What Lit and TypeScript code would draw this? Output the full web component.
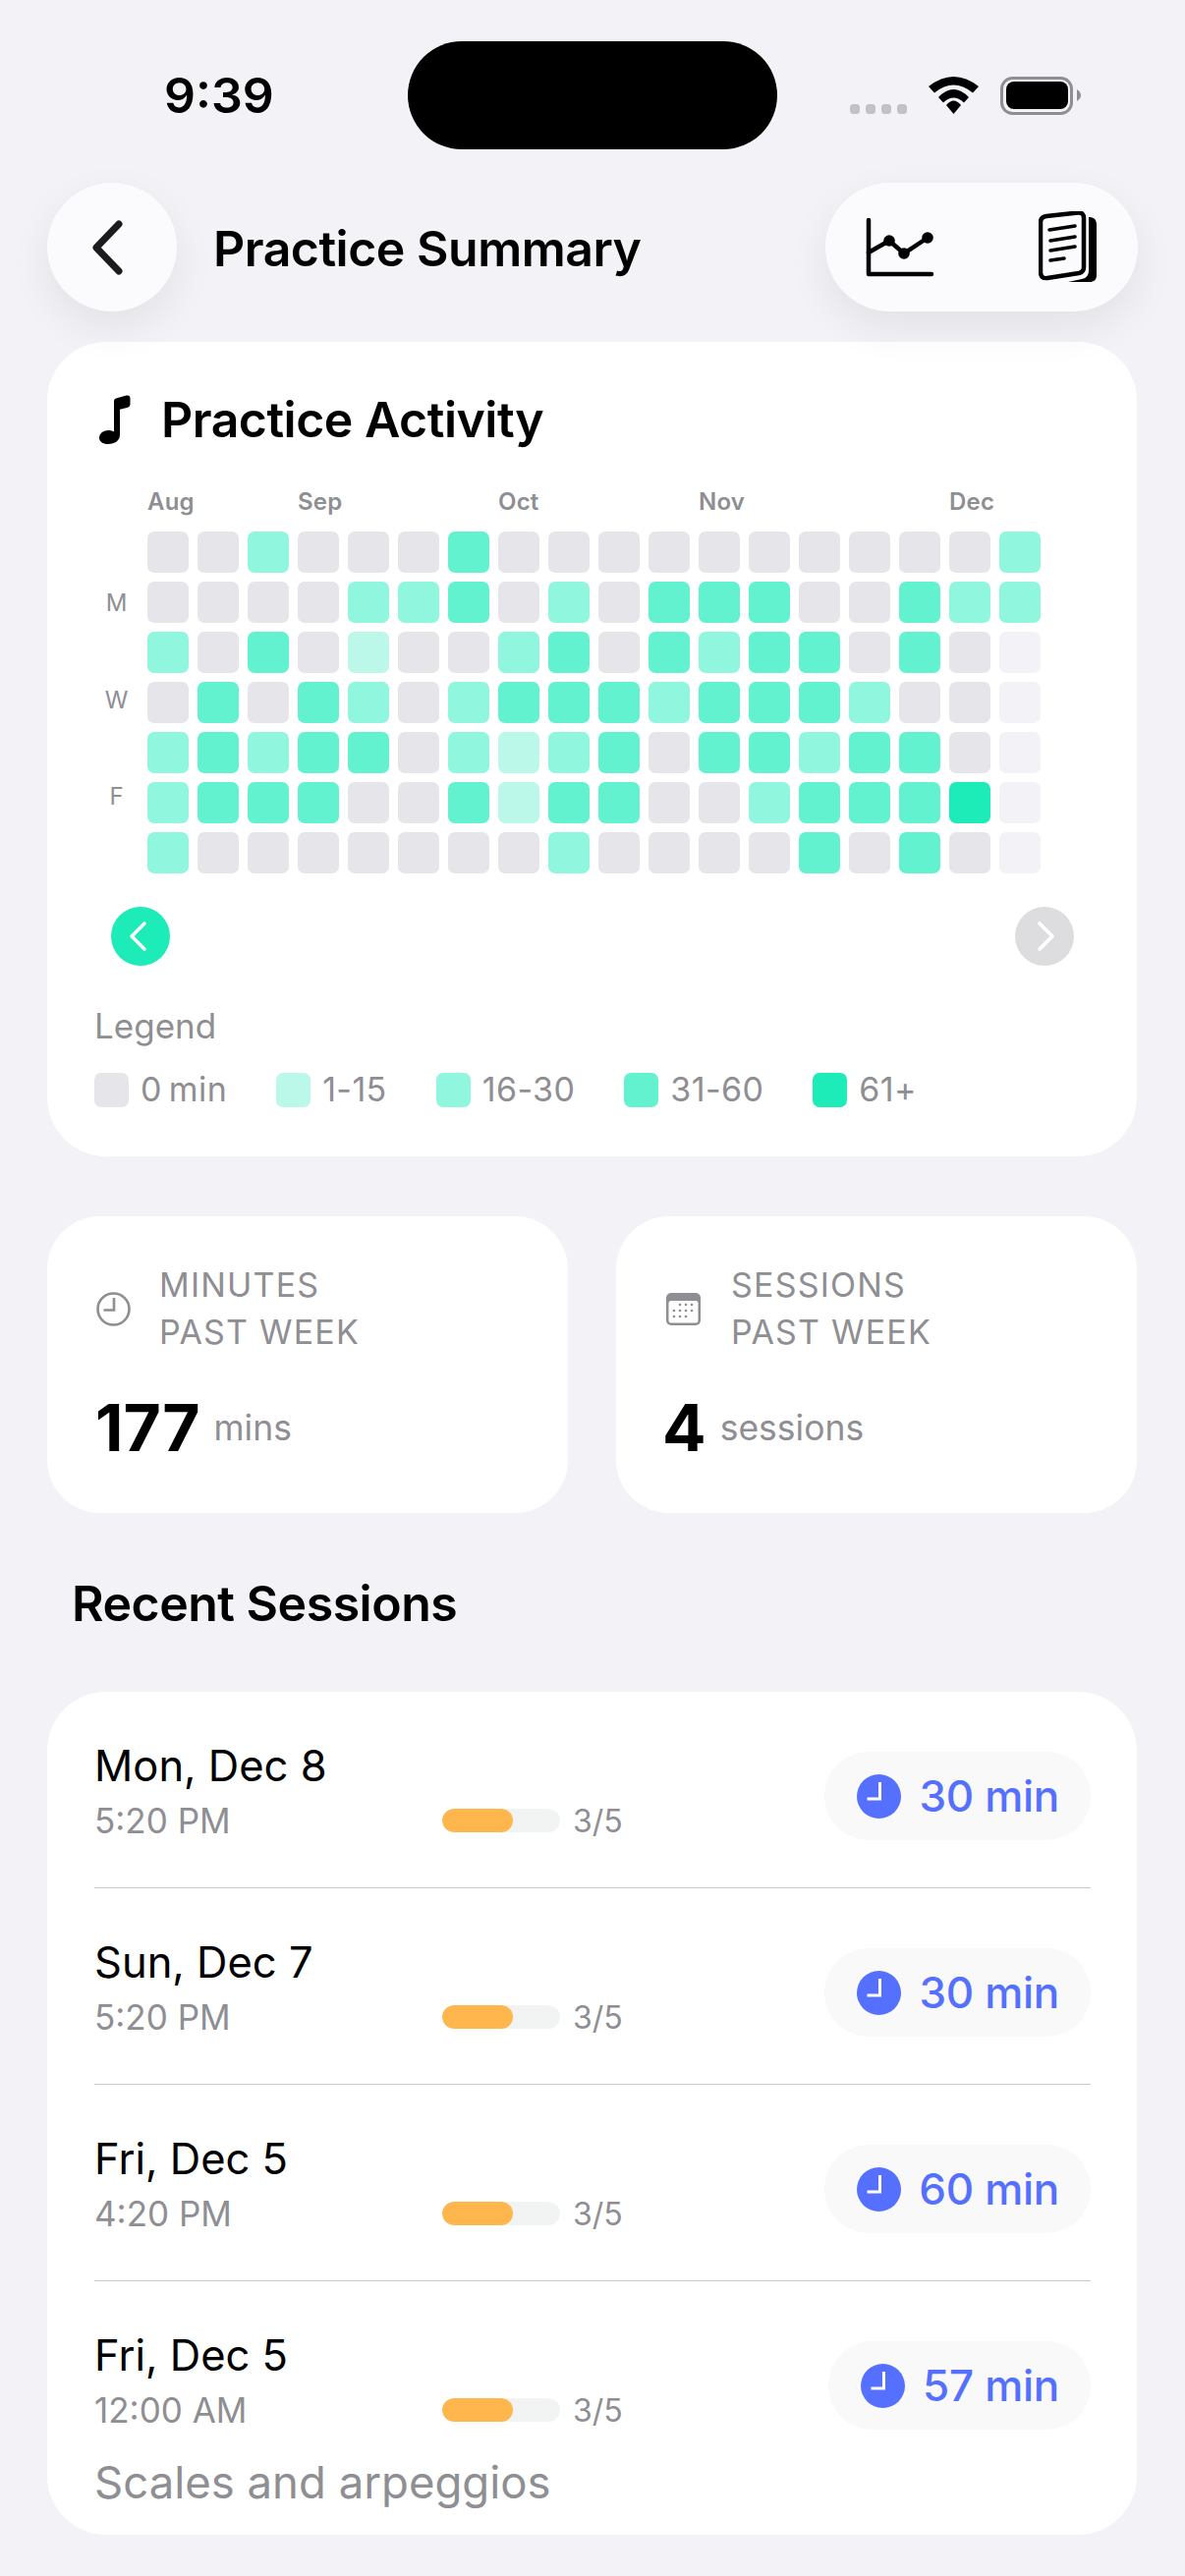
import { LitElement, html, css, svg } from 'lit';
import { customElement } from 'lit/decorators.js';

// 0-4 = minutes bucket, 5 = day still to come
const ACTIVITY = [
  [0, 0, 2, 0, 0, 0, 3, 0, 0, 0, 0, 0, 0, 0, 0, 0, 0, 2],
  [0, 0, 0, 0, 2, 2, 3, 0, 2, 0, 3, 3, 3, 0, 0, 3, 2, 2],
  [2, 0, 3, 0, 1, 0, 0, 2, 3, 0, 3, 2, 3, 3, 0, 3, 0, 5],
  [0, 3, 0, 3, 2, 0, 2, 3, 3, 3, 2, 3, 3, 3, 2, 0, 0, 5],
  [2, 3, 2, 3, 3, 0, 2, 1, 2, 3, 0, 3, 3, 2, 3, 3, 0, 5],
  [2, 3, 3, 3, 0, 0, 3, 1, 3, 3, 0, 0, 2, 3, 3, 3, 4, 5],
  [2, 0, 0, 0, 0, 0, 0, 0, 2, 0, 0, 0, 0, 3, 0, 3, 0, 5],
];

const MONTHS = [
  { label: 'Aug', col: 1 },
  { label: 'Sep', col: 4 },
  { label: 'Oct', col: 8 },
  { label: 'Nov', col: 12 },
  { label: 'Dec', col: 17 },
];

const DAYS = ['', 'M', '', 'W', '', 'F', ''];

const LEGEND = [
  { label: '0 min', level: 0 },
  { label: '1-15', level: 1 },
  { label: '16-30', level: 2 },
  { label: '31-60', level: 3 },
  { label: '61+', level: 4 },
];

const SESSIONS = [
  { date: 'Mon, Dec 8', time: '5:20 PM', mins: 30, note: '' },
  { date: 'Sun, Dec 7', time: '5:20 PM', mins: 30, note: '' },
  { date: 'Fri, Dec 5', time: '4:20 PM', mins: 60, note: '' },
  { date: 'Fri, Dec 5', time: '12:00 AM', mins: 57, note: 'Scales and arpeggios' },
];

const chevron = (points: string, w: number, h: number, sw: number) => html`
  <svg width=${w} height=${h} viewBox="0 0 ${w} ${h}" fill="none" stroke="currentColor" stroke-width=${sw}
    stroke-linecap="round" stroke-linejoin="round"><polyline points=${points}></polyline></svg>
`;

const clockSolid = svg`
  <circle cx="22.5" cy="22.5" r="22.5" fill="#5570ff"></circle>
  <path d="M23.5 8V25H10.500" fill="none" stroke="#fff" stroke-width="3"></path>
`;

@customElement('app-root')
export class AppRoot extends LitElement {
  static styles = css`
    :host {
      display: block;
      width: 1206px;
      height: 2622px;
      overflow: hidden;
      background: #f2f2f7;
      font-family: Inter, 'Liberation Sans', sans-serif;
      color: #000;
    }

    .status {
      display: flex;
      align-items: center;
      height: 110px;
      padding: 42px 106px 0 167px;
    }
    .clock-time {
      width: 248px;
      font-size: 50px;
      font-weight: 600;
    }
    .island {
      width: 376px;
      height: 110px;
      border-radius: 55px;
      background: #000;
    }
    .status-icons {
      display: flex;
      align-items: center;
      gap: 22px;
      margin-left: auto;
    }
    .dots {
      display: flex;
      gap: 6px;
      margin-top: 28px;
    }
    .dots span {
      width: 10px;
      height: 10px;
      border-radius: 3.5px;
      background: #c2c2c6;
    }
    .status-icons svg {
      display: block;
    }

    header {
      position: relative;
      z-index: 1;
      display: flex;
      align-items: center;
      height: 131px;
      margin: 34px 48px 0;
    }
    .back {
      display: flex;
      align-items: center;
      justify-content: center;
      width: 132px;
      height: 131px;
      border-radius: 50%;
      background: #fbfbfe;
      color: #1c1c1e;
      box-shadow: 0 16px 44px rgba(0, 0, 0, 0.07);
    }
    h1 {
      margin: 2px 0 0 37px;
      font-size: 50px;
      line-height: 64px;
      font-weight: 600;
      letter-spacing: -0.5px;
    }
    .actions {
      display: flex;
      align-items: center;
      justify-content: space-between;
      width: 318px;
      height: 131px;
      margin-left: auto;
      padding: 0 41px;
      box-sizing: border-box;
      border-radius: 66px;
      background: #fbfbfe;
      box-shadow: 0 16px 44px rgba(0, 0, 0, 0.07);
    }
    .actions svg {
      display: block;
    }

    .card {
      background: #fff;
      border-radius: 60px;
      margin: 0 49px 0 48px;
    }
    .activity {
      margin-top: 31px;
      height: 829px;
      padding: 49px 49px 0 48px;
      box-sizing: border-box;
    }
    .activity h2 {
      display: flex;
      align-items: center;
      gap: 31px;
      margin: 0 0 0 5px;
      font-size: 50px;
      line-height: 60px;
      font-weight: 600;
      letter-spacing: -0.5px;
    }
    .heat {
      display: grid;
      grid-template-columns: 45px repeat(18, 42px);
      column-gap: 9px;
      margin-top: 39px;
    }
    .month {
      grid-row: 1;
      font-size: 24px;
      line-height: 30px;
      font-weight: 600;
      color: #8e8e93;
      letter-spacing: 0.2px;
      white-space: nowrap;
    }
    .days {
      grid-row: 2;
      grid-column: 1;
      display: grid;
      grid-auto-rows: 49.2px;
      margin-top: 14px;
    }
    .days span {
      font-size: 24px;
      line-height: 49.2px;
      color: #8e8e93;
      text-align: center;
    }
    .cells {
      grid-row: 2;
      grid-column: 2 / -1;
      display: grid;
      grid-template-columns: repeat(18, 42px);
      grid-auto-rows: 42px;
      gap: 9px;
      margin-top: 15px;
    }
    .cell {
      border-radius: 7px;
    }
    .l0 { background: #e5e5ea; }
    .l1 { background: #bbf8e9; }
    .l2 { background: #90f6dd; }
    .l3 { background: #62f2cf; }
    .l4 { background: #1debb8; }
    .l5 { background: #f2f2f7; }
    .pager {
      display: flex;
      justify-content: space-between;
      margin: 34px 15px 0 17px;
    }
    .pager div {
      display: flex;
      align-items: center;
      justify-content: center;
      width: 60px;
      height: 60px;
      border-radius: 50%;
      color: #fff;
    }
    .pager .prev { background: #1debb8; }
    .pager .next { background: #dddddf; }
    .legend-title {
      margin-top: 39px;
      font-size: 35px;
      line-height: 44px;
      color: #8e8e93;
    }
    .legend {
      display: flex;
      gap: 50px;
      margin-top: 23px;
    }
    .legend-item {
      display: flex;
      align-items: center;
      gap: 12px;
      font-size: 34px;
      line-height: 40px;
      letter-spacing: 0.4px;
      word-spacing: -3px;
      color: #8e8e93;
    }
    .swatch {
      width: 35px;
      height: 35px;
      border-radius: 7px;
    }

    .stats {
      display: flex;
      gap: 49px;
      margin: 61px 49px 0 48px;
    }
    .stat {
      flex: none;
      width: 530px;
      height: 302px;
      padding: 46px 0 0 50px;
      box-sizing: border-box;
      border-radius: 54px;
      background: #fff;
    }
    .stat + .stat {
      padding-left: 51px;
    }
    .stat-head {
      display: flex;
      align-items: center;
      gap: 29px;
    }
    .stat + .stat .stat-head {
      gap: 31px;
    }
    .stat-head svg {
      display: block;
      flex: none;
    }
    .stat-label {
      font-size: 34px;
      line-height: 48px;
      letter-spacing: 1.2px;
      color: #8e8e93;
    }
    .stat-value {
      display: flex;
      align-items: center;
      gap: 14px;
      margin: 35px 0 0 -1px;
    }
    .stat + .stat .stat-value {
      margin-left: -4px;
    }
    .stat-value b {
      font-size: 66px;
      line-height: 76px;
      font-weight: 700;
    }
    .stat-value span {
      font-size: 35.5px;
      color: #8e8e93;
    }

    h3 {
      margin: 62px 0 0 73px;
      font-size: 50px;
      line-height: 60px;
      font-weight: 600;
      letter-spacing: -0.5px;
    }

    .sessions {
      margin-top: 60px;
      padding: 0 47px 25px 48px;
    }
    .session {
      padding: 48px 0 46px;
      border-bottom: 1px solid #c6c6c8;
    }
    .session:last-child {
      border-bottom: none;
      padding-bottom: 0;
    }
    .session-main {
      display: flex;
      align-items: flex-start;
    }
    .date {
      font-size: 43.5px;
      line-height: 54px;
    }
    .meta {
      display: flex;
      align-items: center;
      margin-top: 7px;
      height: 44px;
    }
    .time {
      width: 354px;
      font-size: 35px;
      color: #8e8e93;
    }
    .bar {
      width: 120px;
      height: 24px;
      border-radius: 12px;
      background: #f2f4f4;
      overflow: hidden;
    }
    .bar div {
      height: 100%;
      border-radius: 12px;
      background: #ffb74d;
    }
    .score {
      margin-left: 13px;
      font-size: 32px;
      color: #8e8e93;
    }
    .pill {
      display: flex;
      align-items: center;
      gap: 18px;
      height: 90px;
      margin: 13px 0 0 auto;
      padding: 0 32px 0 33px;
      box-sizing: border-box;
      border-radius: 45px;
      background: #f9f9f9;
      color: #5570ff;
      font-size: 44px;
      letter-spacing: -0.3px;
      font-weight: 500;
    }
    .pill svg {
      display: block;
    }
    .note {
      margin-top: 24px;
      font-size: 45.5px;
      line-height: 56px;
      color: #8e8e93;
    }
  `;

  renderActivity() {
    return html`
      <section class="card activity">
        <h2>
          <svg width="32" height="50" viewBox="0 0 32 50">
            <path d="M15 6.5Q15 3.8 17.800 3.200L27.500.600Q31.500-.200 31.500 3.500V9.600Q31.500 12 29 12.700L21 14.700V41C21 46 16 50 9 50 3.500 50 0 47.500 0 43.500 0 39 4.500 36 9.500 36 11.500 36 13.500 36.500 15 37.500Z" fill="#000"></path>
          </svg>
          Practice Activity
        </h2>
        <div class="heat">
          ${MONTHS.map(
            (m) => html`<div class="month" style="grid-column:${m.col + 1}">${m.label}</div>`,
          )}
          <div class="days">${DAYS.map((d) => html`<span>${d}</span>`)}</div>
          <div class="cells">
            ${ACTIVITY.flat().map((level) => html`<div class="cell l${level}"></div>`)}
          </div>
        </div>
        <div class="pager">
          <div class="prev">${chevron('18,4 5,17 18,30', 28, 34, 3.6)}</div>
          <div class="next">${chevron('9,4 22,17 9,30', 28, 34, 3.6)}</div>
        </div>
        <div class="legend-title">Legend</div>
        <div class="legend">
          ${LEGEND.map(
            (item) => html`
              <div class="legend-item">
                <div class="swatch l${item.level}"></div>
                ${item.label}
              </div>
            `,
          )}
        </div>
      </section>
    `;
  }

  renderStats() {
    return html`
      <div class="stats">
        <div class="stat">
          <div class="stat-head">
            <svg width="35" height="35" viewBox="0 0 35 35" fill="none" stroke="#8e8e93" stroke-width="2.600">
              <circle cx="17.500" cy="17.500" r="16"></circle>
              <path d="M18 6V18.500H7.500"></path>
            </svg>
            <div class="stat-label">MINUTES<br />PAST WEEK</div>
          </div>
          <div class="stat-value"><b>177</b><span>mins</span></div>
        </div>
        <div class="stat">
          <div class="stat-head">
            <svg width="35" height="33" viewBox="0 0 35 33">
              <rect x="0" y="0" width="35" height="33" rx="5" fill="#8e8e93"></rect>
              <rect x="2.500" y="8" width="30" height="22.500" rx="2.500" fill="#fff"></rect>
              <g fill="#8e8e93">
                ${[
                  [14, 12], [20, 12], [26, 12],
                  [8, 18], [14, 18], [20, 18], [26, 18],
                  [8, 24], [14, 24], [20, 24],
                ].map(([x, y]) => svg`<circle cx=${x} cy=${y} r="1.300"></circle>`)}
              </g>
            </svg>
            <div class="stat-label">SESSIONS<br />PAST WEEK</div>
          </div>
          <div class="stat-value"><b>4</b><span>sessions</span></div>
        </div>
      </div>
    `;
  }

  renderSessions() {
    return html`
      <section class="card sessions">
        ${SESSIONS.map(
          (s) => html`
            <div class="session">
              <div class="session-main">
                <div>
                  <div class="date">${s.date}</div>
                  <div class="meta">
                    <div class="time">${s.time}</div>
                    <div class="bar"><div style="width:${(3 / 5) * 100}%"></div></div>
                    <div class="score">3/5</div>
                  </div>
                </div>
                <div class="pill">
                  <svg width="45" height="45" viewBox="0 0 45 45">${clockSolid}</svg>
                  ${s.mins} min
                </div>
              </div>
              ${s.note ? html`<div class="note">${s.note}</div>` : ''}
            </div>
          `,
        )}
      </section>
    `;
  }

  render() {
    return html`
      <div class="status">
        <div class="clock-time">9:39</div>
        <div class="island"></div>
        <div class="status-icons">
          <div class="dots"><span></span><span></span><span></span><span></span></div>
          <svg width="51" height="38" viewBox="0 0 51 38" fill="#000">
            <path d="M0 10Q25.500-10 51 10L45 16.500Q25.500 .5 6 16.500Z"></path>
            <path d="M10 21Q25.500 5 41 21L36 26.500Q25.500 16.500 15 26.500Z"></path>
            <path d="M18 29Q25.500 20 33 29L25.500 38Z"></path>
          </svg>
          <svg width="82" height="39" viewBox="0 0 82 39">
            <rect x="1.500" y="1.500" width="71" height="36" rx="11" fill="none" stroke="#8e8e93" stroke-width="3"></rect>
            <rect x="6" y="5" width="63" height="28" rx="8" fill="#000"></rect>
            <path d="M78 13C81 15 82 17 82 19 82 21 81 23 78 25Z" fill="#8e8e93"></path>
          </svg>
        </div>
      </div>

      <header>
        <div class="back">${chevron('27,8 4,32 27,56', 40, 64, 7)}</div>
        <h1>Practice Summary</h1>
        <div class="actions">
          <svg width="70" height="60" viewBox="0 0 70 60" fill="none" stroke="#000" stroke-width="4.500" stroke-linecap="round" stroke-linejoin="round">
            <path d="M3 2V57H67"></path>
            <path d="M3 35 24 23 39 36 63 20"></path>
            <g fill="#000" stroke="none">
              <circle cx="24" cy="23" r="5.800"></circle>
              <circle cx="39" cy="36" r="5.800"></circle>
              <circle cx="63" cy="20" r="5.800"></circle>
            </g>
          </svg>
          <svg width="60" height="73" viewBox="0 0 60 73" fill="none" stroke="#000" stroke-width="4.500" stroke-linecap="round" stroke-linejoin="round">
            <path d="M8 5 40 1.500Q46 1 46 7V57Q46 62 41 63L9 68Q2 69 2 62V11Q2 6 8 5Z"></path>
            <path d="M11 19 37 15M12 30 37 26M12 40 37 36M12 50 26 48" stroke-width="3.500"></path>
            <path d="M51 6C56 6 59 8 59 14V65C59 70 56 72 52 72H30L44 69C49 68 51 65 51 60Z" fill="#000" stroke="none"></path>
          </svg>
        </div>
      </header>

      ${this.renderActivity()} ${this.renderStats()}

      <h3>Recent Sessions</h3>
      ${this.renderSessions()}
    `;
  }
}
